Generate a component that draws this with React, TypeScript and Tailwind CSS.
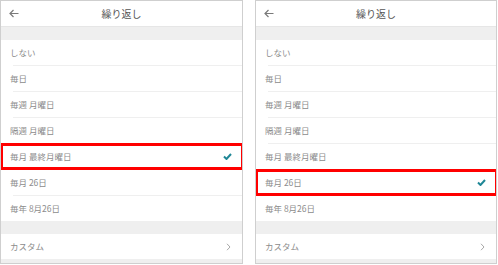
const options = ['しない', '毎日', '毎週 月曜日', '隔週 月曜日', '毎月 最終月曜日', '毎月 26日', '毎年 8月26日']

const ArrowLeft = () => (
  <svg width="10" height="9" viewBox="0 0 10 9" fill="none" stroke="#7a7a7a" strokeWidth="1.2">
    <path d="M9.5 4.5H1M4.5 1L1 4.5L4.5 8" />
  </svg>
)

const Check = () => (
  <svg width="9" height="7" viewBox="0 0 9 7" fill="none" stroke="#1f8796" strokeWidth="2">
    <path d="M1 3.5L3.5 6L8 1" />
  </svg>
)

const Chevron = () => (
  <svg width="5" height="8" viewBox="0 0 5 8" fill="none" stroke="#a8a8a8" strokeWidth="1">
    <path d="M1 0.8L4 4L1 7.2" />
  </svg>
)

function Panel({ selected, width }: { selected: number; width: string }) {
  return (
    <div className={`${width} h-[264px] border border-[#cfcfcf] bg-white flex flex-col overflow-hidden`}>
      {/* Header */}
      <div className="h-[26px] shrink-0 relative flex items-center justify-center border-b border-[#e6e6e6]">
        <div className="absolute left-[8px] top-[8px]">
          <ArrowLeft />
        </div>
        <span className="text-[10px] text-[#555]">繰り返し</span>
      </div>
      <div className="h-[13px] shrink-0 bg-[#efefef]" />

      {/* Options */}
      {options.map((label, i) => (
        <div key={label} className="shrink-0">
          <div className="relative h-[25px] flex items-center justify-between pl-[9px] pr-[10px]">
            <span className="text-[8.5px] text-[#8c8c8c]">{label}</span>
            {i === selected && <Check />}
            {i === selected && (
              <div className="absolute -left-[1px] -right-[2px] -top-[1px] -bottom-[1px] border-[3px] border-[#ff0000]" />
            )}
          </div>
          {i < options.length - 1 && <div className="h-px ml-[12px] bg-[#efefef]" />}
        </div>
      ))}

      <div className="h-[13px] shrink-0 bg-[#efefef]" />
      <div className="h-[25px] shrink-0 flex items-center justify-between pl-[9px] pr-[11px]">
        <span className="text-[8.5px] text-[#8c8c8c]">カスタム</span>
        <Chevron />
      </div>
      <div className="flex-1 bg-[#efefef]" />
    </div>
  )
}

export default function App() {
  return (
    <div
      className="w-[498px] h-[265px] bg-white flex gap-[12px]"
      style={{ fontFamily: '"Noto Sans CJK JP", "Noto Sans", sans-serif' }}
    >
      <Panel selected={4} width="w-[243px]" />
      <Panel selected={5} width="w-[242px]" />
    </div>
  )
}
